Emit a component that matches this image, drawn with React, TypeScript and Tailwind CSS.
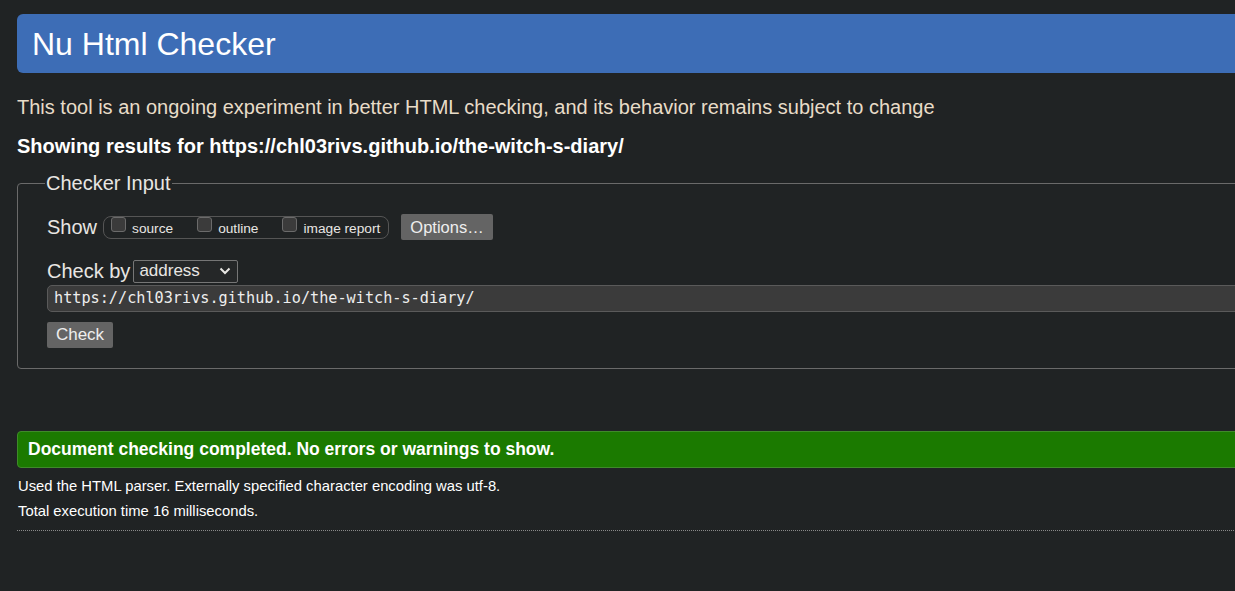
const sans = "font-['Liberation_Sans',Arial,sans-serif]";

function Checkbox({ label }: { label: string }) {
    return (
        <label className="flex items-start gap-[6px] pr-[24px] last:pr-[8px]">
            <span className="mt-[0px] block h-[15px] w-[15px] rounded-[3px] border border-[#6b6b6b] bg-[#3b3b3b]" />
            <span className="mt-[4px] text-[13.7px] leading-[16px]">{label}</span>
        </label>
    );
}

export default function App() {
    return (
        <div
            className={`min-h-[591px] w-full overflow-hidden bg-[#202324] text-[#e8e6e3] ${sans}`}
        >
            <div className="w-[1280px] pl-[17px] pt-[14px]">
                <h1 className="flex h-[59px] items-center rounded-[6px] bg-[#3d6db6] pl-[15px] text-[32px] text-white">
                    Nu Html Checker
                </h1>

                <p className="mt-[23px] text-[20px] leading-[22px] text-[#e8dcc8]">
                    This tool is an ongoing experiment in better HTML checking,
                    and its behavior remains subject to change
                </p>
                <p className="mt-[17px] text-[20px] font-bold leading-[22px] text-white">
                    Showing results for https://chl03rivs.github.io/the-witch-s-diary/
                </p>

                <fieldset className="mt-[14px] h-[198px] rounded-[4px] border border-[#6a6a6a] pl-[29px]">
                    <legend className="-ml-[2px] px-[1px] text-[20px] leading-[24px]">
                        Checker Input
                    </legend>

                    <div className="mt-[19px] flex items-center">
                        <span className="text-[20px] leading-[24px]">Show</span>
                        <div className="ml-[6px] flex h-[23px] items-start rounded-[8px] border border-[#555] pl-[7px]">
                            <Checkbox label="source" />
                            <Checkbox label="outline" />
                            <Checkbox label="image report" />
                        </div>
                        <button className="ml-[12px] h-[26px] rounded-[2px] bg-[#646464] px-[9px] text-[16.5px] leading-[20px] text-[#eee]">
                            Options…
                        </button>
                    </div>

                    <div className="mt-[19px] flex items-center">
                        <span className="text-[20px] leading-[24px]">Check by</span>
                        <div className="ml-[3px] flex h-[23px] w-[105px] items-center justify-between rounded-[2px] border border-[#767676] bg-[#252728] pl-[5px] pr-[6px]">
                            <span className="text-[17px] leading-[20px]">address</span>
                            <svg
                                width="12"
                                height="8"
                                viewBox="0 0 12 8"
                                fill="none"
                                stroke="#e8e6e3"
                                strokeWidth="2"
                            >
                                <path d="M1.5 1.5 6 6l4.5-4.5" />
                            </svg>
                        </div>
                    </div>

                    <div className="mt-[2px] flex h-[27px] items-center rounded-[5px] border border-[#5a5a5a] bg-[#3b3b3b] pl-[6px] font-['DejaVu_Sans_Mono',monospace] text-[15.2px] text-[#eee]">
                        https://chl03rivs.github.io/the-witch-s-diary/
                    </div>

                    <button className="mt-[10px] h-[26px] w-[66px] rounded-[2px] bg-[#646464] text-[17px] leading-[20px] text-[#eee]">
                        Check
                    </button>
                </fieldset>

                <div className="mt-[62px] flex h-[37px] items-center rounded-[4px] border border-[#3f8a2a] bg-[#1b7a00] pl-[10px] text-[17.5px] font-bold text-white">
                    Document checking completed. No errors or warnings to show.
                </div>

                <p className="mt-[10px] pl-[1px] text-[14.8px] leading-[17px] text-white">
                    Used the HTML parser. Externally specified character encoding
                    was utf-8.
                </p>
                <p className="mt-[8px] pl-[1px] text-[14.8px] leading-[17px] text-white">
                    Total execution time 16 milliseconds.
                </p>
                <div className="mt-[10px] border-t border-dotted border-[#8a8a8a]" />
            </div>
        </div>
    );
}
